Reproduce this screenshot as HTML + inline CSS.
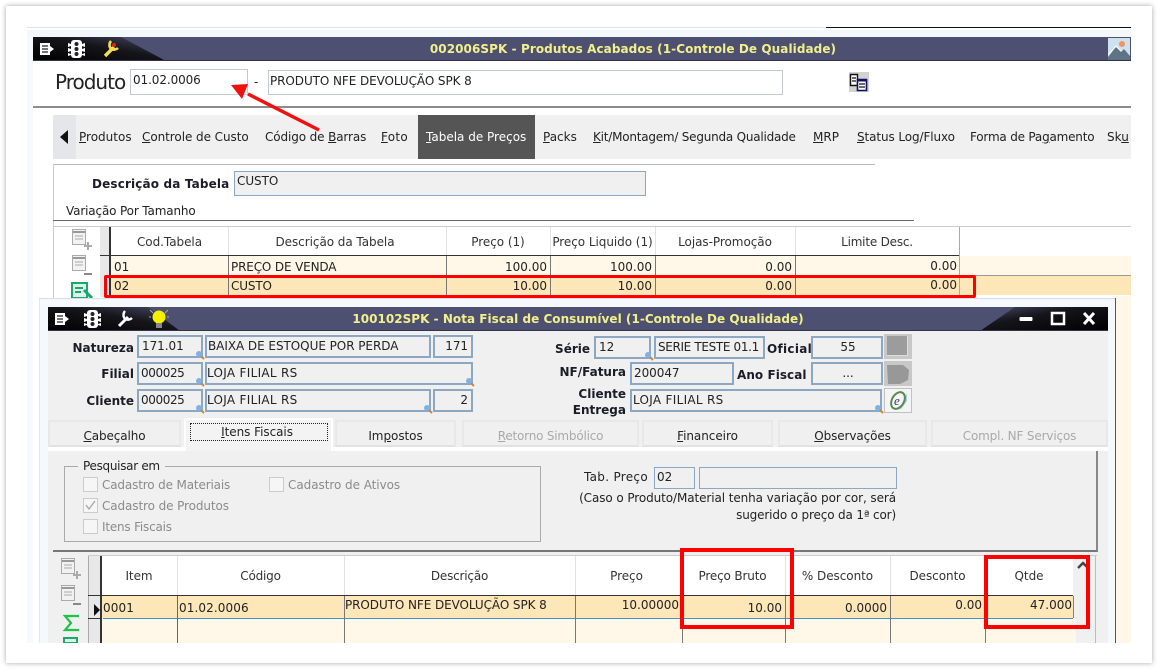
<!DOCTYPE html>
<html><head><meta charset="utf-8"><style>
html,body{margin:0;padding:0;background:#fff}
#p{position:relative;width:1158px;height:669px;overflow:hidden;background:#fff;font:12px "DejaVu Sans","Liberation Sans",sans-serif;color:#222}
#card{position:absolute;left:6px;top:6px;width:1146px;height:657px;background:#fff;box-shadow:0 0 5px rgba(0,0,0,.35)}
#c{position:absolute;left:0;top:0;width:1158px;height:669px;filter:blur(.3px)}
.b,.t,.f{position:absolute;box-sizing:border-box}
.t{white-space:nowrap;line-height:16px;letter-spacing:0}
.bd{font-weight:bold;color:#1c1c28;letter-spacing:0}
.f{background:#f0f0f0;border:2px solid #8ba7c2;padding:0 0 0 2px;line-height:19px;white-space:nowrap;overflow:hidden;letter-spacing:-.05px}
.h{position:absolute;text-align:center;line-height:16px;color:#333;white-space:nowrap;letter-spacing:-.05px}
.tab{position:absolute;top:420px;height:27px;background:#f0f0f0;border:2px solid #e8e8e8;border-bottom:2px solid #e2e2e2;box-sizing:border-box;text-align:center;line-height:28px;letter-spacing:-.05px;white-space:nowrap}
.dis{color:#a9a9a9}
.cb{position:absolute;width:15px;height:15px;background:#f6f6f6;border:1px solid #ccc;box-sizing:border-box}
.g{color:#8b8b8b}
.r{position:absolute;box-sizing:border-box;border-style:solid;border-color:#f00}
.v{position:absolute;width:1px}
u{text-decoration:underline}
</style></head><body><div id="p"><div id="card"></div><div id="c">

<div class="b" style="left:27px;top:27px;width:1104px;height:616px;background:#fff"></div>
<div class="b" style="left:27px;top:27px;width:800px;height:1px;background:#dbe3ec"></div>
<div class="b" style="left:826px;top:27px;width:305px;height:1px;background:#111"></div>
<div class="b" style="left:27px;top:30px;width:1104px;height:7px;background:#f4f7fb"></div>
<div class="b" style="left:27px;top:37px;width:6px;height:606px;background:#f6f9fd"></div>

<!-- title bar 1 -->
<svg class="b" style="left:33px;top:37px" width="1098" height="24">
 <defs><linearGradient id="dk" x1="0" y1="1" x2="1" y2="0"><stop offset="0" stop-color="#000"/><stop offset=".55" stop-color="#14141a"/><stop offset="1" stop-color="#4a4c68"/></linearGradient>
 <linearGradient id="dk2" x1="1" y1="1" x2="0" y2="0"><stop offset="0" stop-color="#000"/><stop offset=".6" stop-color="#14141a"/><stop offset="1" stop-color="#4a4c68"/></linearGradient></defs>
 <rect width="1098" height="24" fill="#4d5070"/>
 <path d="M0 0H88L133 24H0z" fill="url(#dk)"/>
 <rect y="23" width="1098" height="1" fill="#33344a"/>
 <path d="M7 6h10v12H7z" fill="#fff"/><path d="M9 9h6M9 12h6M9 15h6" stroke="#222" stroke-width="1.200"/><path d="M17 9l4 3-4 3z" fill="#fff"/>
 <rect x="38" y="3" width="11" height="18" rx="3" fill="#fff"/><circle cx="43.500" cy="7" r="2" fill="#222"/><circle cx="43.500" cy="12" r="2" fill="#222"/><circle cx="43.500" cy="17" r="2" fill="#222"/>
 <path d="M35 6l3 1v2l-3 1zM35 11l3 1v2l-3 1zM35 16l3 1v1l-3 1zM52 6l-3 1v2l3 1zM52 11l-3 1v2l3 1zM52 16l-3 1v1l3 1z" fill="#fff"/>
 <path d="M72 19l9-9" stroke="#f2e050" stroke-width="3.400"/><path d="M78 4a6 6 0 0 0 0 8 6 6 0 0 0 7-1" fill="none" stroke="#f2e050" stroke-width="2.600"/><circle cx="81" cy="8" r="2" fill="#d22"/>
</svg>
<div class="t" style="left:133px;width:1000px;top:41px;text-align:center;font-weight:bold;color:#f2f08c;letter-spacing:.08px">002006SPK - Produtos Acabados (1-Controle De Qualidade)</div>
<svg class="b" style="left:1108px;top:38px" width="22" height="22"><rect width="22" height="22" fill="#cfe0ef"/><path d="M0 19L8 9l5 5 3-3 6 7v4H0z" fill="#5e7386"/><path d="M0 17L8 8l5 5" stroke="#fff" fill="none"/><circle cx="14" cy="6" r="3" fill="#ee9560"/></svg>

<div class="t" style="left:55px;top:69px;font-size:20px;line-height:26px;font-family:'DejaVu Sans';letter-spacing:-1px;color:#222">Produto</div>
<div class="b" style="left:130px;top:69px;width:118px;height:26px;border:1px solid #c4c9cf;background:#fff"></div>
<div class="t" style="left:133px;top:72px;letter-spacing:-.1px">01.02.0006</div>
<div class="t" style="left:254px;top:74px">-</div>
<div class="b" style="left:268px;top:70px;width:515px;height:25px;border:1px solid #c4c9cf;background:#fff"></div>
<div class="t" style="left:270px;top:73px;letter-spacing:-.08px">PRODUTO NFE DEVOLUÇÃO SPK 8</div>
<svg class="b" style="left:849px;top:72px" width="20" height="20"><rect width="20" height="20" fill="#d2d2d2"/><path d="M1.500 2.500h7v11h-7z" fill="#fff" stroke="#111" stroke-width="1.400"/><path d="M8.500 7.500h9v11h-9z" fill="#fff" stroke="#116" stroke-width="1.600"/><path d="M3 6h4M3 9h4M10 12h6M10 15h6" stroke="#111" stroke-width="1.200"/><rect x="8" y="7" width="10" height="2.500" fill="#116"/></svg>
<div class="b" style="left:33px;top:106px;width:1098px;height:2px;background:#8c8c8c"></div>

<!-- tab strip -->
<div class="b" style="left:53px;top:115px;width:1078px;height:44px;background:#f0f0f0"></div>
<div class="b" style="left:53px;top:115px;width:23px;height:44px;background:#e4e6ea"></div>
<svg class="b" style="left:60px;top:130px" width="9" height="14"><path d="M8 0v14L0 7z" fill="#111"/></svg>
<div class="b" style="left:418px;top:115px;width:117px;height:44px;background:#555"></div>
<div class="t" style="left:79px;top:129px"><u>P</u>rodutos</div>
<div class="t" style="left:142px;top:129px;letter-spacing:-.06px"><u>C</u>ontrole de Custo</div>
<div class="t" style="left:265px;top:129px;letter-spacing:-.12px">Código de <u>B</u>arras</div>
<div class="t" style="left:381px;top:129px;letter-spacing:.3px"><u>F</u>oto</div>
<div class="t" style="left:426px;top:129px;color:#fff"><u>T</u>abela de Preços</div>
<div class="t" style="left:543px;top:129px"><u>P</u>acks</div>
<div class="t" style="left:593px;top:129px;letter-spacing:-.22px"><u>K</u>it/Montagem/ Segunda Qualidade</div>
<div class="t" style="left:813px;top:129px"><u>M</u>RP</div>
<div class="t" style="left:857px;top:129px;letter-spacing:-.1px"><u>S</u>tatus Log/Fluxo</div>
<div class="t" style="left:970px;top:129px;letter-spacing:-.2px">Forma de Pa<u>g</u>amento</div>
<div class="t" style="left:1107px;top:129px">Sk<u>u</u></div>

<!-- upper panel -->
<div class="b" style="left:53px;top:164px;width:822px;height:1px;background:#bbb"></div>
<div class="b" style="left:53px;top:164px;width:1px;height:135px;background:#ccc"></div>
<div class="t bd" style="left:92px;top:176px;letter-spacing:.15px">Descrição da Tabela</div>
<div class="f" style="left:234px;top:171px;width:412px;height:25px;border-width:1px;line-height:18px">CUSTO</div>
<div class="t" style="left:66px;top:203px;letter-spacing:-.15px">Variação Por Tamanho</div>
<div class="b" style="left:53px;top:220px;width:861px;height:1px;background:#666"></div>
<div class="b" style="left:53px;top:226px;width:1078px;height:1px;background:#ccc"></div>

<!-- upper grid -->
<div class="b" style="left:100px;top:227px;width:10px;height:70px;background:#e8e8e8"></div>
<div class="b" style="left:111px;top:227px;width:849px;height:28px;background:#fff"></div>
<div class="b" style="left:100px;top:255px;width:860px;height:1px;background:#333"></div>
<div class="b" style="left:111px;top:256px;width:1020px;height:20px;background:#fff8e8"></div>
<div class="b" style="left:111px;top:276px;width:1020px;height:19px;background:#fde6b8"></div>
<div class="b" style="left:111px;top:275px;width:1020px;height:1px;background:#999"></div>
<div class="b" style="left:109px;top:227px;width:2px;height:70px;background:#333"></div>
<div class="v" style="left:228px;top:227px;height:28px;background:#e2e2e2"></div><div class="v" style="left:228px;top:256px;height:40px;background:#777"></div>
<div class="v" style="left:446px;top:227px;height:28px;background:#e2e2e2"></div><div class="v" style="left:446px;top:256px;height:40px;background:#777"></div>
<div class="v" style="left:550px;top:227px;height:28px;background:#e2e2e2"></div><div class="v" style="left:550px;top:256px;height:40px;background:#777"></div>
<div class="v" style="left:655px;top:227px;height:28px;background:#e2e2e2"></div><div class="v" style="left:655px;top:256px;height:40px;background:#777"></div>
<div class="v" style="left:795px;top:227px;height:28px;background:#e2e2e2"></div><div class="v" style="left:795px;top:256px;height:40px;background:#777"></div>
<div class="v" style="left:959px;top:227px;height:70px;background:#aaa"></div>
<div class="h" style="left:110px;width:119px;top:234px">Cod.Tabela</div>
<div class="h" style="left:226px;width:218px;top:234px">Descrição da Tabela</div>
<div class="h" style="left:446px;width:104px;top:234px">Preço (1)</div>
<div class="h" style="left:550px;width:105px;top:234px">Preço Liquido (1)</div>
<div class="h" style="left:655px;width:140px;top:234px">Lojas-Promoção</div>
<div class="h" style="left:795px;width:164px;top:234px;letter-spacing:-.2px">Limite Desc.</div>
<div class="t" style="left:114px;top:259px">01</div>
<div class="t" style="left:231px;top:259px;letter-spacing:-.15px">PREÇO DE VENDA</div>
<div class="t" style="left:447px;width:100px;top:259px;text-align:right">100.00</div>
<div class="t" style="left:551px;width:101px;top:259px;text-align:right">100.00</div>
<div class="t" style="left:656px;width:136px;top:259px;text-align:right">0.00</div>
<div class="t" style="left:796px;width:161px;top:258px;text-align:right">0.00</div>
<div class="t" style="left:114px;top:278px">02</div>
<div class="t" style="left:231px;top:278px;letter-spacing:-.15px">CUSTO</div>
<div class="t" style="left:447px;width:100px;top:278px;text-align:right">10.00</div>
<div class="t" style="left:551px;width:101px;top:278px;text-align:right">10.00</div>
<div class="t" style="left:656px;width:136px;top:278px;text-align:right">0.00</div>
<div class="t" style="left:796px;width:161px;top:277px;text-align:right">0.00</div>
<svg class="b" style="left:70px;top:228px" width="26" height="70">
 <rect x="2.500" y="1.500" width="13" height="15" fill="#f2f2f2" stroke="#aaa"/><path d="M3 4h12" stroke="#999" stroke-width="2"/><path d="M5 8h8M5 11h8" stroke="#aaa"/><path d="M18 14v8M14 18h8" stroke="#aaa" stroke-width="2"/>
 <rect x="2.500" y="27.500" width="13" height="15" fill="#f2f2f2" stroke="#aaa"/><path d="M3 30h12" stroke="#999" stroke-width="2"/><path d="M5 34h8M5 37h8" stroke="#aaa"/><path d="M14 46h8" stroke="#888" stroke-width="2"/>
 <path d="M2 55h15v15H2z" fill="#dff3ea" stroke="#1aa86e" stroke-width="2"/><path d="M5 60h8M5 64h6" stroke="#1aa86e" stroke-width="2"/><path d="M14 62l8 8" stroke="#1aa86e" stroke-width="3"/>
</svg>
<div class="r" style="left:104px;top:275px;width:872px;height:23px;border-width:3px;border-radius:2px"></div>

<!-- second window -->
<div class="b" style="left:39px;top:298px;width:1077px;height:345px;background:#f5f8fc;border-top:1px solid #d9dee4;border-left:1px solid #e2e7ed"></div>
<div class="b" style="left:1115px;top:298px;width:1px;height:345px;background:#555"></div>
<div class="b" style="left:1116px;top:296px;width:15px;height:347px;background:#fff8e8"></div>
<div class="b" style="left:48px;top:331px;width:1060px;height:312px;background:#f0f0f0"></div>
<svg class="b" style="left:48px;top:307px" width="1060" height="24">
 <rect width="1060" height="24" fill="#4d5070"/>
 <path d="M0 0H100L132 24H0z" fill="url(#dk)"/>
 <path d="M1060 0H967L932 24H1060z" fill="url(#dk2)"/>
 <rect y="23" width="1060" height="1" fill="#33344a"/>
 <path d="M7 6h10v12H7z" fill="#fff"/><path d="M9 9h6M9 12h6M9 15h6" stroke="#222" stroke-width="1.200"/><path d="M17 9l4 3-4 3z" fill="#fff"/>
 <rect x="39" y="3" width="11" height="18" rx="3" fill="#fff"/><circle cx="44.500" cy="7" r="2" fill="#222"/><circle cx="44.500" cy="12" r="2" fill="#222"/><circle cx="44.500" cy="17" r="2" fill="#222"/>
 <path d="M36 6l3 1v2l-3 1zM36 11l3 1v2l-3 1zM36 16l3 1v1l-3 1zM53 6l-3 1v2l3 1zM53 11l-3 1v2l3 1zM53 16l-3 1v1l3 1z" fill="#fff"/>
 <path d="M71 19l9-9" stroke="#fff" stroke-width="3"/><path d="M77 4a6 6 0 0 0 0 8 6 6 0 0 0 7-1" fill="none" stroke="#fff" stroke-width="2.400"/>
 <circle cx="111" cy="10" r="6.500" fill="#f6f000"/><rect x="108" y="16" width="6" height="5" fill="#888"/><path d="M102 3l3 3M120 3l-3 3M101 10h2M119 10h2" stroke="#aaa"/>
</svg>
<div class="t" style="left:48px;width:1060px;top:311px;text-align:center;font-weight:bold;color:#f2f08c;letter-spacing:.03px">100102SPK - Nota Fiscal de Consumível (1-Controle De Qualidade)</div>
<svg class="b" style="left:1015px;top:310px" width="90" height="18"><rect x="4.500" y="7" width="13" height="4" rx="1" fill="#fff"/><rect x="37" y="3" width="12" height="11" fill="none" stroke="#fff" stroke-width="2.500"/><path d="M69 3l10 11M79 3L69 14" stroke="#fff" stroke-width="3"/></svg>

<div class="t bd" style="right:1024px;top:340px">Natureza</div>
<div class="t bd" style="right:1024px;top:366px">Filial</div>
<div class="t bd" style="right:1024px;top:393px">Cliente</div>
<div class="f" style="left:137px;top:335px;width:66px;height:23px;padding-left:3px">171.01</div>
<div class="f" style="left:205px;top:335px;width:226px;height:23px;padding-left:1px">BAIXA DE ESTOQUE POR PERDA</div>
<div class="f" style="left:433px;top:335px;width:40px;height:23px;text-align:right;padding-right:3px">171</div>
<div class="f" style="left:137px;top:362px;width:66px;height:23px;letter-spacing:-.4px">000025</div>
<div class="f" style="left:205px;top:362px;width:268px;height:23px;padding-left:0;letter-spacing:.3px">LOJA FILIAL RS</div>
<div class="f" style="left:137px;top:389px;width:66px;height:23px;letter-spacing:-.4px">000025</div>
<div class="f" style="left:205px;top:389px;width:226px;height:23px;padding-left:0;letter-spacing:.3px">LOJA FILIAL RS</div>
<div class="f" style="left:433px;top:389px;width:40px;height:23px;text-align:right;padding-right:3px">2</div>

<div class="t bd" style="right:568px;top:341px">Série</div>
<div class="t bd" style="right:532px;top:364px">NF/Fatura</div>
<div class="t bd" style="right:532px;top:386px">Cliente</div>
<div class="t bd" style="right:532px;top:402px">Entrega</div>
<div class="t bd" style="left:767px;top:341px;letter-spacing:.3px">Oficial</div>
<div class="t bd" style="left:737px;top:367px;letter-spacing:.05px">Ano Fiscal</div>
<div class="f" style="left:594px;top:336px;width:57px;height:23px;padding-left:3px">12</div>
<div class="f" style="left:654px;top:336px;width:111px;height:23px;letter-spacing:-.35px">SERIE TESTE 01.1</div>
<div class="f" style="left:630px;top:362px;width:104px;height:23px">200047</div>
<div class="f" style="left:630px;top:389px;width:252px;height:23px;padding-left:1px;letter-spacing:.3px">LOJA FILIAL RS</div>
<div class="f" style="left:811px;top:336px;width:72px;height:23px;text-align:center">55</div>
<div class="f" style="left:811px;top:362px;width:72px;height:23px;text-align:center">...</div>
<div class="b" style="left:884px;top:334px;width:28px;height:25px;background:#c8c8c8"></div>
<div class="b" style="left:887px;top:336px;width:21px;height:20px;background:#9c9c9c;border-right:1px solid #ddd;border-bottom:1px solid #ddd"></div>
<div class="b" style="left:884px;top:361px;width:28px;height:25px;background:#c8c8c8"></div>
<svg class="b" style="left:885px;top:362px" width="26" height="23"><path d="M2 3h16l6 5-1 10-8 4H3z" fill="#989898"/></svg>
<div class="b" style="left:884px;top:388px;width:28px;height:25px;background:#f4f4f4;border:1px solid #c0c0c0"></div>
<svg class="b" style="left:885px;top:389px" width="26" height="23"><path d="M14 3l8 1-4 10-8 7 6-1 6-8 0-8" fill="#a8c8ee"/><ellipse cx="13" cy="11.500" rx="6" ry="9" transform="rotate(30 13 11.500)" fill="none" stroke="#5a8a4a" stroke-width="2"/><text x="9" y="16" font-size="13" font-style="italic" fill="#336" font-family="Liberation Serif">e</text></svg>
<svg class="b" style="left:0;top:0;pointer-events:none" width="1158" height="669">
<circle cx="199" cy="354" r="3" fill="#7fb0e6"/><path d="M201 356l3 3" stroke="#c88a3a" stroke-width="2"/>
<circle cx="199" cy="381" r="3" fill="#7fb0e6"/><path d="M201 383l3 3" stroke="#c88a3a" stroke-width="2"/>
<circle cx="199" cy="408" r="3" fill="#7fb0e6"/><path d="M201 410l3 3" stroke="#c88a3a" stroke-width="2"/>
<circle cx="469" cy="381" r="3" fill="#7fb0e6"/><path d="M471 383l3 3" stroke="#c88a3a" stroke-width="2"/>
<circle cx="427" cy="408" r="3" fill="#7fb0e6"/><path d="M429 410l3 3" stroke="#c88a3a" stroke-width="2"/>
<circle cx="648" cy="355" r="3" fill="#7fb0e6"/><path d="M650 357l3 3" stroke="#c88a3a" stroke-width="2"/>
<circle cx="878" cy="408" r="3" fill="#7fb0e6"/><path d="M880 410l3 3" stroke="#c88a3a" stroke-width="2"/>
</svg>

<!-- tabs -->
<div class="tab" style="left:48px;width:133px;letter-spacing:-.1px"><u>C</u>abeçalho</div>
<div class="tab" style="left:335px;width:121px">Im<u>p</u>ostos</div>
<div class="tab dis" style="left:462px;width:177px;letter-spacing:-.2px"><u>R</u>etorno Simbólico</div>
<div class="tab" style="left:642px;width:131px"><u>F</u>inanceiro</div>
<div class="tab" style="left:778px;width:149px;letter-spacing:-.1px"><u>O</u>bservações</div>
<div class="tab dis" style="left:931px;width:177px;letter-spacing:-.15px">Compl. NF Serviços</div>
<div class="b" style="left:48px;top:447px;width:1060px;height:4px;background:#fff"></div>
<div class="b" style="left:184px;top:418px;width:149px;height:33px;background:#f3f3f3;border:2px solid #fff;border-bottom:0"></div>
<div class="b" style="left:190px;top:423px;width:138px;height:18px;border:1px dotted #222"></div>
<div class="h" style="left:188px;width:138px;top:424px;color:#222"><u>I</u>tens Fiscais</div>

<!-- search panel -->
<div class="b" style="left:53px;top:451px;width:1045px;height:101px;background:#f0f0f0;border-right:2px solid #888;border-bottom:2px solid #777"></div>
<div class="b" style="left:64px;top:466px;width:477px;height:76px;border:1px solid #aaa"></div>
<div class="t" style="left:78px;top:458px;background:#f0f0f0;padding:0 5px;letter-spacing:-.3px">Pesquisar em</div>
<div class="cb" style="left:83px;top:477px"></div><div class="t g" style="left:102px;top:477px;letter-spacing:-.15px">Cadastro de Materiais</div>
<div class="cb" style="left:269px;top:477px"></div><div class="t g" style="left:288px;top:477px;letter-spacing:-.05px">Cadastro de Ativos</div>
<div class="cb" style="left:83px;top:498px"></div><svg class="b" style="left:83px;top:498px" width="15" height="15"><path d="M3 7l3 4 6-8" fill="none" stroke="#aaa" stroke-width="1.400"/></svg><div class="t g" style="left:102px;top:498px;letter-spacing:-.1px">Cadastro de Produtos</div>
<div class="cb" style="left:83px;top:519px"></div><div class="t g" style="left:102px;top:519px;letter-spacing:-.2px">Itens Fiscais</div>
<div class="t" style="left:584px;top:469px;letter-spacing:.3px">Tab. Preço</div>
<div class="f" style="left:654px;top:467px;width:41px;height:22px;border-width:1px;line-height:19px">02</div>
<div class="f" style="left:699px;top:467px;width:198px;height:22px;border-width:1px"></div>
<div class="t" style="right:262px;top:490px;letter-spacing:-.09px">(Caso o Produto/Material tenha variação por cor, será</div>
<div class="t" style="right:262px;top:507px;letter-spacing:-.15px">sugerido o preço da 1ª cor)</div>

<!-- lower grid -->
<div class="b" style="left:88px;top:555px;width:1009px;height:1px;background:#ccc"></div>
<div class="b" style="left:88px;top:556px;width:12px;height:87px;background:#e8e8e8"></div>
<div class="b" style="left:88px;top:556px;width:1px;height:87px;background:#aaa"></div>
<div class="b" style="left:101px;top:556px;width:972px;height:39px;background:#fff"></div>
<div class="b" style="left:88px;top:595px;width:985px;height:1px;background:#333"></div>
<div class="b" style="left:101px;top:596px;width:972px;height:22px;background:#fde6b8"></div>
<div class="b" style="left:103px;top:618px;width:970px;height:1px;background:#4a90c8"></div>
<div class="b" style="left:101px;top:619px;width:975px;height:24px;background:#fff8e8"></div>
<div class="b" style="left:1076px;top:556px;width:19px;height:87px;background:#f0f0f0"></div>
<div class="b" style="left:1073px;top:556px;width:3px;height:63px;background:#f0f0f0"></div>
<div class="b" style="left:1095px;top:556px;width:1px;height:87px;background:#bbb"></div>
<div class="b" style="left:1073px;top:596px;width:1px;height:22px;background:#4a90c8"></div>
<div class="b" style="left:100px;top:556px;width:2px;height:87px;background:#333"></div>
<div class="b" style="left:88px;top:618px;width:12px;height:1px;background:#333"></div>
<div class="v" style="left:177px;top:556px;height:39px;background:#e2e2e2"></div><div class="v" style="left:177px;top:596px;height:47px;background:#666"></div>
<div class="v" style="left:344px;top:556px;height:39px;background:#e2e2e2"></div><div class="v" style="left:344px;top:596px;height:47px;background:#777"></div>
<div class="v" style="left:575px;top:556px;height:39px;background:#e2e2e2"></div><div class="v" style="left:575px;top:596px;height:47px;background:#777"></div>
<div class="v" style="left:682px;top:556px;height:39px;background:#e2e2e2"></div><div class="v" style="left:682px;top:596px;height:47px;background:#777"></div>
<div class="v" style="left:785px;top:556px;height:39px;background:#e2e2e2"></div><div class="v" style="left:785px;top:596px;height:47px;background:#777"></div>
<div class="v" style="left:890px;top:556px;height:39px;background:#e2e2e2"></div><div class="v" style="left:890px;top:596px;height:47px;background:#777"></div>
<div class="v" style="left:985px;top:556px;height:39px;background:#e2e2e2"></div><div class="v" style="left:985px;top:596px;height:47px;background:#777"></div>
<div class="h" style="left:101px;width:76px;top:568px">Item</div>
<div class="h" style="left:177px;width:167px;top:568px;letter-spacing:-.2px">Código</div>
<div class="h" style="left:344px;width:231px;top:568px;letter-spacing:-.2px">Descrição</div>
<div class="h" style="left:575px;width:103px;top:568px">Preço</div>
<div class="h" style="left:681px;width:103px;top:568px;letter-spacing:-.15px">Preço Bruto</div>
<div class="h" style="left:785px;width:105px;top:568px">% Desconto</div>
<div class="h" style="left:890px;width:95px;top:568px">Desconto</div>
<div class="h" style="left:985px;width:88px;top:568px">Qtde</div>
<div class="t" style="left:103px;top:600px;letter-spacing:.1px">0001</div>
<div class="t" style="left:179px;top:600px;letter-spacing:.1px">01.02.0006</div>
<div class="t" style="left:345px;top:597px;letter-spacing:-.08px">PRODUTO NFE DEVOLUÇÃO SPK 8</div>
<div class="t" style="left:575px;width:104px;top:597px;text-align:right">10.00000</div>
<div class="t" style="left:682px;width:100px;top:600px;text-align:right">10.00</div>
<div class="t" style="left:785px;width:102px;top:600px;text-align:right">0.0000</div>
<div class="t" style="left:890px;width:92px;top:597px;text-align:right">0.00</div>
<div class="t" style="left:985px;width:87px;top:597px;text-align:right">47.000</div>
<svg class="b" style="left:60px;top:556px" width="40" height="87">
 <rect x="1.500" y="2.500" width="13" height="15" fill="#f2f2f2" stroke="#aaa"/><path d="M2 5h12" stroke="#999" stroke-width="2"/><path d="M4 9h8M4 12h8" stroke="#aaa"/><path d="M17 15v8M13 19h8" stroke="#aaa" stroke-width="2"/>
 <rect x="1.500" y="29.500" width="13" height="15" fill="#f2f2f2" stroke="#aaa"/><path d="M2 32h12" stroke="#999" stroke-width="2"/><path d="M4 36h8M4 39h8" stroke="#aaa"/><path d="M13 48h8" stroke="#888" stroke-width="2"/>
 <path d="M19 60H5l6 7-6 7h14" fill="none" stroke="#1cc44c" stroke-width="2.200"/>
 <path d="M4 82h13v5H4z" fill="#d8f2e4" stroke="#1aa86e" stroke-width="2"/>
 <path d="M34 48l6 6-6 6z" fill="#111"/>
</svg>
<svg class="b" style="left:1076px;top:560px" width="14" height="12"><path d="M2 8l5-5 5 5" fill="none" stroke="#444" stroke-width="2.400"/></svg>
<div class="r" style="left:680px;top:548px;width:114px;height:81px;border-width:4px"></div>
<div class="r" style="left:984px;top:555px;width:106px;height:74px;border-width:4px"></div>

<!-- arrow -->
<svg class="b" style="left:0;top:0" width="1158" height="669"><path d="M319 130L248 94" stroke="#f01010" stroke-width="3.400"/><path d="M231 85l17-1-6 15z" fill="#f01010"/></svg>

<!-- bottom white cover -->
<div class="b" style="left:27px;top:643px;width:1104px;height:18px;background:#fff"></div>
</div></div></body></html>
